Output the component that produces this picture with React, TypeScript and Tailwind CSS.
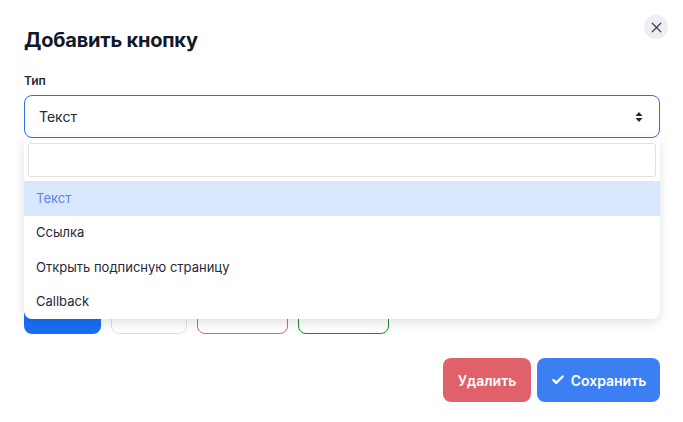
import { Check, X } from "lucide-react";

const options = ["Текст", "Ссылка", "Открыть подписную страницу", "Callback"];

export default function App() {
  return (
    <div className="relative w-[683px] h-[422px] bg-white pl-6 pr-[23px] pt-[26px] font-['Inter',sans-serif] text-[#1f2937]">
      <button className="absolute top-[15px] right-[15px] w-6 h-6 rounded-full bg-[#eceef1] flex items-center justify-center text-[#374151]">
        <X size={17} strokeWidth={1.75} />
      </button>

      <h2 className="text-[20px] leading-7 font-bold text-[#111827] tracking-[-0.2px]">Добавить кнопку</h2>

      <div className="mt-[19px] text-[12px] leading-4 font-semibold text-[#1f2937]">Тип</div>

      <div className="relative mt-[6px]">
        <div className="h-[43px] rounded-lg border border-[#2f6fe0] flex items-center justify-between px-[14px] text-[14px] text-[#1f2937]">
          <span>Текст</span>
          <svg width="8" height="12" viewBox="0 0 8 12" className="mr-[2px]">
            <path d="M4 1 L7.5 5 H0.5 Z" fill="#1f2937" />
            <path d="M4 11 L7.5 7 H0.5 Z" fill="#1f2937" />
          </svg>
        </div>

        {/* fields hidden under the open dropdown */}
        <div className="mt-[46px] h-[43px] rounded-lg border border-[#d1d5db]" />
        <div className="mt-[67px] flex gap-[10px]">
          <div className="w-[77px] h-[40px] rounded-lg bg-[#1a6ef5]" />
          <div className="w-[76px] h-[40px] rounded-lg border border-[#e0e0e0]" />
          <div className="w-[91px] h-[40px] rounded-lg border border-[#e0606a]" />
          <div className="w-[91px] h-[40px] rounded-lg border border-[#1a8a2e]" />
        </div>

        <div className="absolute left-0 right-0 top-[43px] bg-white rounded-b-lg shadow-[0_4px_12px_rgba(0,0,0,0.12)] pt-[5px]">
          <div className="mx-1 h-[34px] rounded-[3px] border border-[#e2e2e2]" />
          <div className="mt-1">
            {options.map((o, i) => (
              <div
                key={o}
                className={`h-[34.5px] flex items-center px-3 text-[13px] ${i === 0 ? "bg-[#d9e7fd] text-[#5b84f0]" : "text-[#1f2937]"}`}
              >
                {o}
              </div>
            ))}
          </div>
        </div>
      </div>

      <div className="mt-6 flex justify-end gap-[6px]">
        <button className="w-[88px] h-[44px] rounded-lg bg-[#e0616a] text-white text-[14px] font-semibold">Удалить</button>
        <button className="w-[123px] h-[44px] rounded-lg bg-[#3b7ff3] text-white text-[14px] font-semibold flex items-center justify-center gap-[6px]">
          <Check size={14} strokeWidth={4} />
          Сохранить
        </button>
      </div>
    </div>
  );
}
